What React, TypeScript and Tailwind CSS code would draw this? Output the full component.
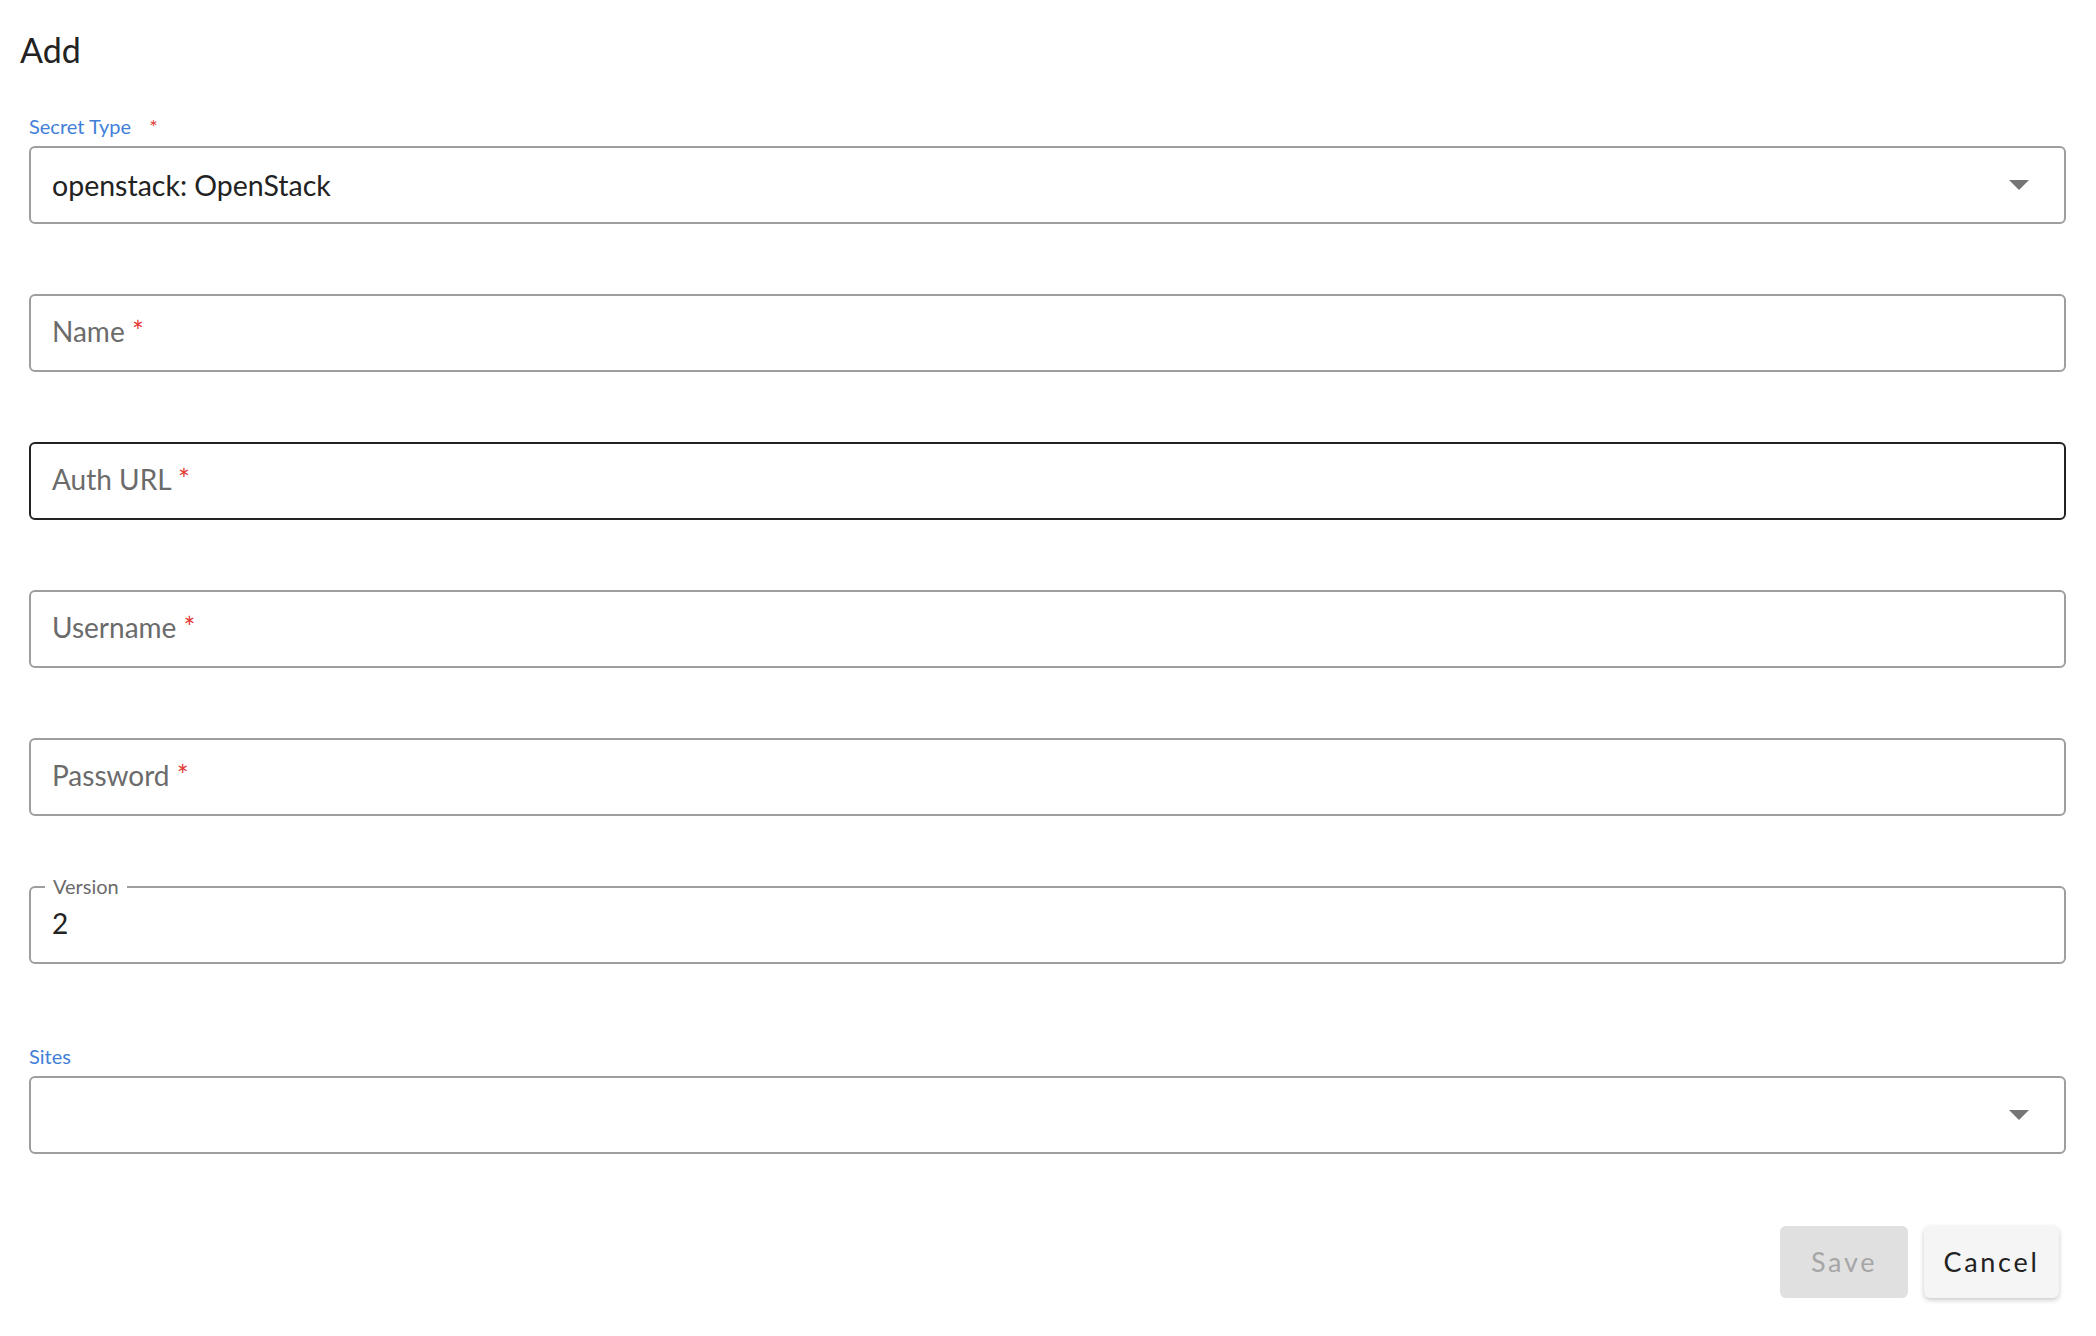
import { ReactNode } from "react";

function Arrow() {
  return (
    <svg width="20" height="10" viewBox="0 0 20 10" className="shrink-0">
      <path d="M0 0 L20 0 L10 10 Z" fill="#757575" />
    </svg>
  );
}

function Req() {
  return <span className="text-[#e53935]">*</span>;
}

function TextBox({ label, active }: { label: string; active?: boolean }) {
  return (
    <div
      className={`mt-[70px] h-[78px] flex items-center pl-[21px] pb-[4px] rounded-[6px] border-2 ${
        active ? "border-[#222222]" : "border-[#9e9e9e]"
      }`}
    >
      <span className="text-[28px] text-[#6b6b6b]">
        {label} <Req />
      </span>
    </div>
  );
}

function SelectBox({ children }: { children?: ReactNode }) {
  return (
    <div className="h-[78px] flex items-center justify-between pl-[21px] pr-[35px] rounded-[6px] border-2 border-[#9e9e9e]">
      <span className="text-[28.5px] text-[#222222]">{children}</span>
      <Arrow />
    </div>
  );
}

export default function App() {
  return (
    <div className="w-[2096px] h-[1336px] bg-white font-['Lato',sans-serif] overflow-hidden">
      <h1 className="pl-[20px] pt-[30px] text-[34px] leading-[40px] text-[#222222]">Add</h1>

      <div className="pl-[29px] pr-[30px] mt-[48px]">
        <div className="h-[28px] text-[20px] leading-[16px] text-[#3f7fd9]">
          Secret Type<span className="ml-[18px] text-[#e53935]">*</span>
        </div>
        <SelectBox>openstack: OpenStack</SelectBox>

        <TextBox label="Name" />
        <TextBox label="Auth URL" active />
        <TextBox label="Username" />
        <TextBox label="Password" />

        <div className="relative mt-[70px] h-[78px] flex items-center pl-[21px] pb-[4px] rounded-[6px] border-2 border-[#9e9e9e]">
          <span className="absolute -top-[13px] left-[14px] px-[8px] bg-white text-[20px] leading-[22px] text-[#6b6b6b]">
            Version
          </span>
          <span className="text-[28px] text-[#222222]">2</span>
        </div>

        <div className="mt-[84px] h-[28px] text-[20px] leading-[16px] text-[#3f7fd9]">Sites</div>
        <SelectBox />

        <div className="mt-[72px] flex justify-end gap-[16px] pr-[7px]">
          <button
            disabled
            className="w-[128px] h-[72px] rounded-[6px] bg-[#e0e0e0] text-[27px] tracking-[0.1em] text-[#a6a6a6]"
          >
            Save
          </button>
          <button className="w-[135px] h-[72px] rounded-[6px] bg-[#f5f5f5] text-[27px] tracking-[0.1em] text-[#222222] shadow-[0_2px_5px_rgba(0,0,0,0.22)]">
            Cancel
          </button>
        </div>
      </div>
    </div>
  );
}
